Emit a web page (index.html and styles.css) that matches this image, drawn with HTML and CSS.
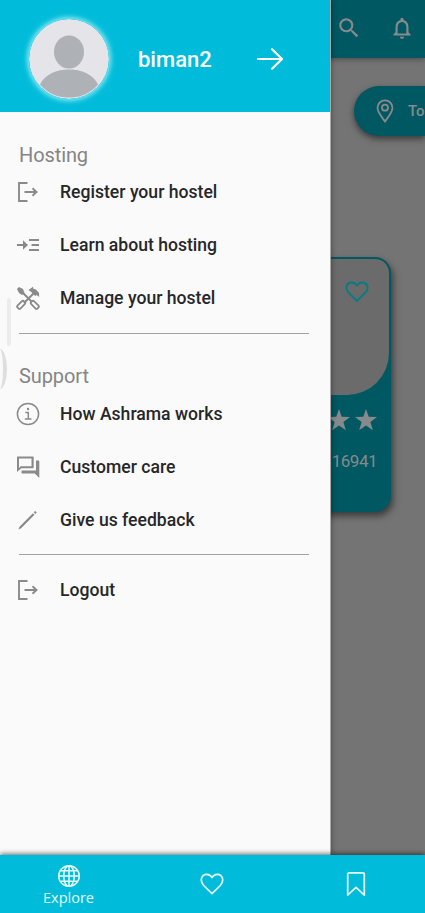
FILE: index.html
```
<!DOCTYPE html>
<html lang="en">
<head>
<meta charset="utf-8">
<meta name="viewport" content="width=device-width, initial-scale=1">
<title>Ashrama</title>
<link rel="stylesheet" href="styles.css">
</head>
<body>
<div class="app">
  <div class="screen">
    <main class="page">
      <header class="topbar">
        <svg class="icon" width="26" height="26" viewBox="0 0 24 24"><path fill="currentColor" d="M15.500 14h-.79l-.28-.27A6.470 6.470 0 0 0 16 9.500 6.500 6.500 0 1 0 9.500 16c1.610 0 3.090-.59 4.230-1.570l.27.28v.79l5 4.990L20.490 19l-4.990-5zm-6 0C7.010 14 5 11.990 5 9.500S7.010 5 9.500 5 14 7.010 14 9.500 11.990 14 9.500 14z"/></svg>
        <svg class="icon" width="26" height="26" viewBox="0 0 24 24"><path fill="currentColor" d="M12 22c1.100 0 2-.9 2-2h-4c0 1.100.9 2 2 2zm6-6v-5c0-3.070-1.630-5.640-4.500-6.320V4c0-.83-.67-1.500-1.500-1.500s-1.500.67-1.500 1.500v.68C7.640 5.360 6 7.920 6 11v5l-2 2v1h16v-1l-2-2zm-2 1H8v-6c0-2.480 1.510-4.500 4-4.500s4 2.020 4 4.500v6z"/></svg>
      </header>
      <div class="chip">
        <svg width="18" height="24" viewBox="0 0 18 24" fill="none" stroke="currentColor" stroke-width="1.800"><path d="M9 22.500C6.500 19 1.500 13.500 1.500 8.800a7.500 7.500 0 0 1 15 0C16.500 13.500 11.500 19 9 22.500z"/><circle cx="9" cy="8.700" r="3"/></svg>
        <span>Top</span>
      </div>
      <article class="card">
        <div class="card-photo">
          <svg width="24" height="22" viewBox="0 0 24 22"><path fill="none" stroke="currentColor" stroke-width="1.900" stroke-linejoin="round" d="M12 20L3.700 11.700C-.7 7 2 1.500 6.500 1.500c2.500 0 4.300 1.200 5.500 3 1.200-1.800 3-3 5.500-3 4.500 0 7.200 5.500 2.800 10.200z"/></svg>
        </div>
        <div class="stars">
          <svg width="22" height="22" viewBox="0 0 22 22"><path fill="currentColor" d="M11 0l2.700 7.800 8.300.2-6.600 5 2.400 8.200L11 16.400l-6.800 4.800L6.600 13 0 8l8.300-.2z"/></svg>
          <svg width="22" height="22" viewBox="0 0 22 22"><path fill="currentColor" d="M11 0l2.700 7.800 8.300.2-6.600 5 2.400 8.200L11 16.400l-6.800 4.800L6.600 13 0 8l8.300-.2z"/></svg>
        </div>
        <div class="price">16941</div>
      </article>
    </main>

    <aside class="drawer">
      <header class="profile">
        <svg class="avatar" width="80" height="80" viewBox="0 0 80 80"><circle cx="40" cy="40" r="40" fill="#e4e4e9"/><ellipse cx="40" cy="33" rx="15" ry="16.500" fill="#aeb1b6"/><path fill="#aeb1b6" d="M11 65.500C16 55 28 50.500 40 50.500s24 4.500 29 15C62 74 52 78.500 40 78.500S18 74 11 65.500z"/></svg>
        <span class="username">biman2</span>
        <svg class="arrow" width="28" height="24" viewBox="0 0 28 24" fill="none" stroke="currentColor" stroke-width="2.200" stroke-linecap="round" stroke-linejoin="round"><path d="M2 12h24M16 2.200L26 12 16 21.800"/></svg>
      </header>
      <nav class="menu">
        <section class="group">
          <h2>Hosting</h2>
          <a class="item"><svg width="24" height="24" viewBox="0 0 24 24" fill="none" stroke="currentColor" stroke-width="1.900"><path d="M11.500 3H3v18h8.500M8.500 12h12M16.500 8.300l4 3.700-4 3.700"/></svg><span>Register your hostel</span></a>
          <a class="item"><svg width="24" height="24" viewBox="0 0 24 24" fill="none" stroke="currentColor" stroke-width="1.800"><path d="M1 12h8M13 7h10M15.500 12H23M13 17h10"/><path fill="currentColor" stroke="none" d="M7 7.300l5 4.700-5 4.700z"/></svg><span>Learn about hosting</span></a>
          <a class="item"><svg width="24" height="24" viewBox="0 0 24 24" fill="none" stroke="currentColor"><path stroke-width="2" d="M6 6l10 10M18 7L8 17"/><path fill="currentColor" stroke="none" d="M1 3l2-2 4 2 1.500 4L6 9 3 7zM12.500 4L17 .8l.5 2.200 2 .2 3.500 3.600.2 4.200-2.500-2-1.500 1-4.200-4.300z"/><rect x="-2.100" y="-4.500" width="4.200" height="9" rx="1.600" stroke-width="1.800" transform="translate(5.200 18.800) rotate(45)"/><rect x="-2.100" y="-4.500" width="4.200" height="9" rx="1.600" stroke-width="1.800" transform="translate(18.800 18.800) rotate(-45)"/></svg><span>Manage your hostel</span></a>
        </section>
        <section class="group">
          <h2>Support</h2>
          <a class="item"><svg width="24" height="24" viewBox="0 0 24 24" fill="none" stroke="currentColor" stroke-width="1.500"><circle cx="12" cy="12" r="10.600"/><path d="M9.300 10.500h3V17M8.800 17h6.700"/><circle cx="12" cy="7" r="1.200" fill="currentColor" stroke="none"/></svg><span>How Ashrama works</span></a>
          <a class="item"><svg width="24" height="24" viewBox="0 0 24 24"><path fill="currentColor" d="M15.500 3.500v7.800H4.700l-1.700 1.600V3.500h12.500M16.800 1.500H2c-.6 0-1 .4-1 1V17l4.300-3.800h11.500c.5 0 .9-.4.900-1V2.500c0-.6-.4-1-.9-1zM22.400 5.500h-2.400v10H5.500v2c0 .6.4 1 1 1h12.300L23.300 23V6.500c0-.6-.4-1-.9-1z"/></svg><span>Customer care</span></a>
          <a class="item"><svg width="24" height="24" viewBox="0 0 24 24"><path fill="currentColor" d="M2.500 21.500l1-2.700L16.900 5.200l1.600 1.600L5.100 20.300zM17.700 4.300l1.500-1.400 1.600 1.600-1.500 1.400z"/></svg><span>Give us feedback</span></a>
        </section>
        <section class="group last">
          <a class="item"><svg width="24" height="24" viewBox="0 0 24 24" fill="none" stroke="currentColor" stroke-width="1.900"><path d="M11.500 3H3v18h8.500M8.500 12h12M16.500 8.300l4 3.700-4 3.700"/></svg><span>Logout</span></a>
        </section>
      </nav>
      <i class="edge-bar"></i>
      <i class="edge-handle"></i>
    </aside>
  </div>

  <nav class="tabbar">
    <a class="tab explore"><svg width="24" height="24" viewBox="0 0 24 24" fill="none" stroke="currentColor" stroke-width="1.500"><circle cx="12" cy="12" r="10.300"/><ellipse cx="12" cy="12" rx="5.300" ry="10.300"/><path d="M12 1.700v20.600M1.700 12h20.600M3.500 6.800h17M3.500 17.200h17"/></svg><span>Explore</span></a>
    <a class="tab"><svg width="24" height="22" viewBox="0 0 24 22"><path fill="none" stroke="currentColor" stroke-width="1.700" stroke-linejoin="round" d="M12 20.700L3.700 12.500C-.8 7.500 1.700 1.300 6.700 1.300c2.300 0 4.200 1.300 5.300 3.200 1.100-1.900 3-3.200 5.300-3.200 5 0 7.500 6.200 3 11.200z"/></svg></a>
    <a class="tab"><svg width="20" height="26" viewBox="0 0 20 26"><path fill="none" stroke="currentColor" stroke-width="1.700" stroke-linejoin="round" d="M1.700 24.200V3.200c0-.8.500-1.400 1.300-1.400h14c.8 0 1.300.6 1.300 1.400v21L10 16.300z"/></svg></a>
  </nav>
</div>
</body>
</html>
```
FILE: styles.css
```
* { box-sizing: border-box; }
body { margin: 0; font-family: Roboto, "Liberation Sans", sans-serif; }
svg { display: block; flex: none; }
.app { display: flex; flex-direction: column; width: 425px; height: 913px; overflow: hidden; }
.screen { position: relative; flex: 1; min-height: 0; overflow: hidden; }

/* dimmed page behind the drawer */
.page { height: 100%; background: #747475; color: #868a8c; display: flex; flex-direction: column; align-items: flex-end; overflow: hidden; }
.topbar { width: 100%; height: 58px; flex: none; background: #005862; box-shadow: 0 2px 5px rgba(0,0,0,.3); display: flex; justify-content: flex-end; align-items: center; gap: 27px; padding: 0 10px 3px 0; }
.chip { width: 71px; height: 50px; margin-top: 28px; flex: none; background: #005862; border-radius: 25px 0 0 25px; box-shadow: 0 3px 6px rgba(0,0,0,.5); display: flex; align-items: center; gap: 14px; padding-left: 22px; font-size: 15px; font-weight: 500; white-space: nowrap; }
.card { width: 220px; height: 255px; margin: 121px 34px 0 0; flex: none; background: #005862; border-radius: 16px; box-shadow: 2px 4px 7px rgba(0,0,0,.5); padding: 2px; }
.card-photo { height: 136px; background: #6b6b6c; border-radius: 14px 14px 42px 14px; display: flex; justify-content: flex-end; padding: 22px 20px 0 0; color: #087c80; }
.stars { display: flex; justify-content: flex-end; gap: 5px; padding: 14px 12px 0 0; }
.price { text-align: right; padding: 20px 12px 0 0; font-size: 17px; line-height: 20px; letter-spacing: -.5px; }

/* navigation drawer */
.drawer { position: absolute; top: 0; left: 0; width: 331px; height: 100%; background: #fafafa; border-right: 1px solid #aaa; box-shadow: 1px 0 5px rgba(0,0,0,.3); }
.profile { width: 330px; height: 112px; background: #00bcda; color: #fff; display: flex; align-items: center; padding: 6px 0 0 29px; }
.avatar { border-radius: 50%; box-shadow: 0 0 5px 2px #8beaf5; }
.username { width: 119px; padding-left: 29px; font-size: 22px; font-weight: 500; }
.arrow { margin-left: 28px; }
.menu { padding-left: 19px; color: #8a8a8a; }
.group { width: 290px; padding-top: 33px; }
.group:not(.last) { height: 221px; border-bottom: 1.5px solid #a2a2a2; }
.group + .group { padding-top: 32px; }
.group:first-child { height: 222px; border-bottom: 1.500px solid #a2a2a2; }
.group.last { padding-top: 8px; }
.group h2 { margin: 0; font-size: 20px; line-height: 21px; font-weight: 400; letter-spacing: -.1px; color: #858585; }
.item { height: 53px; display: flex; align-items: center; gap: 20px; margin-left: -3px; }
.group:first-child .item { position: relative; top: -1px; }
.item span { font-size: 17.6px; font-weight: 500; color: #27272a; white-space: nowrap; }
.edge-bar { position: absolute; left: 7px; top: 298px; width: 4px; height: 48px; background: #ececec; border-radius: 2px; }
.edge-handle { position: absolute; left: -8px; top: 349px; width: 15px; height: 40px; border-right: 4px solid #dedede; border-radius: 50%; }

/* bottom tabs */
.tabbar { position: relative; height: 58px; flex: none; background: #00bcda; color: #e4fbff; box-shadow: 0 -1px 5px rgba(0,0,0,.6); display: grid; grid-template-columns: 137px 150px 138px; }
.tab { display: flex; flex-direction: column; align-items: center; justify-content: center; font-family: "Open Sans", sans-serif; font-size: 14.5px; line-height: 20px; }
.explore { padding-top: 3px; }
```
